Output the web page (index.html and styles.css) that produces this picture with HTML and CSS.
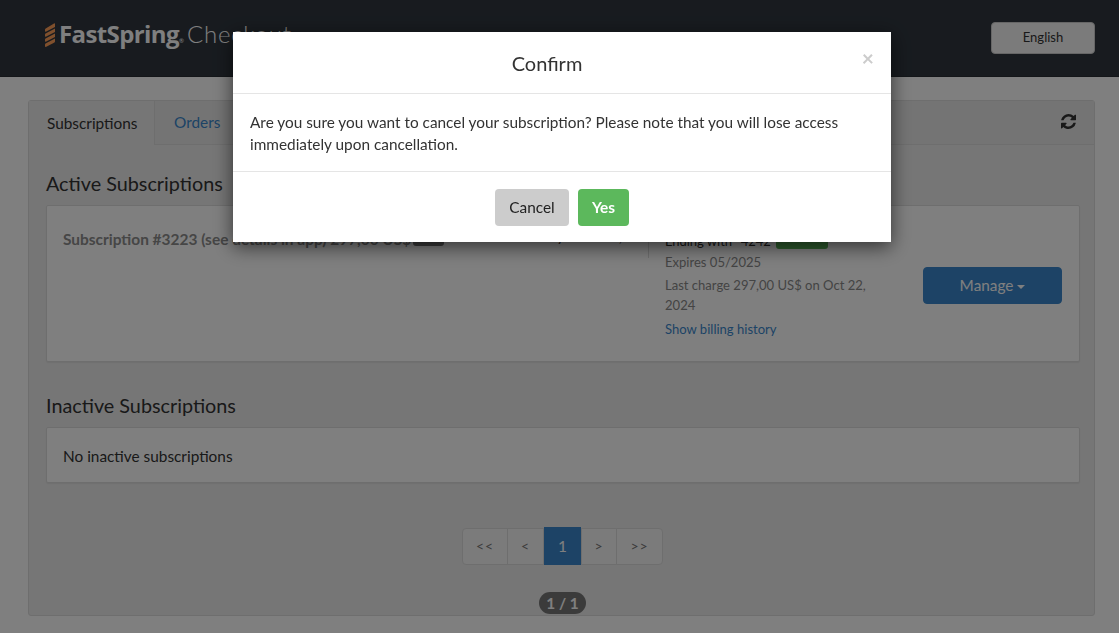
FILE: index.html
```html
<!DOCTYPE html>
<html lang="en">
<head>
<meta charset="utf-8">
<title>FastSpring Checkout</title>
<link rel="stylesheet" href="styles.css">
</head>
<body>
<header class="topbar">
  <div class="brand">
    <svg class="brand-mark" viewBox="0 0 10 24" aria-hidden="true">
      <path d="M1.5 5 L9 .5 Q10 0 10 1 V4 L.8 8.8 Q0 9 0 8 V6.5 Q0 5.8 1.5 5 Z"/>
      <path d="M1 10.2 L10 5.4 V9 L.8 13.8 Q0 14 0 13 V11.4 Q0 10.7 1 10.2 Z"/>
      <path d="M1 15.2 L10 10.4 V14 L.8 18.8 Q0 19 0 18 V16.4 Q0 15.7 1 15.2 Z"/>
      <path d="M1 20.2 L10 15.4 V18.5 Q10 19.2 9 19.7 L.8 23.9 Q0 24 0 23 V21.4 Q0 20.7 1 20.2 Z"/>
    </svg>
    <span class="brand-name">FastSpring</span><span class="brand-tm">®</span>
    <span class="brand-sub">Checkout</span>
  </div>
  <button class="lang-btn">English</button>
</header>

<main class="page">
  <section class="panel">
    <nav class="tabs">
      <a class="tab tab-active">Subscriptions</a>
      <a class="tab tab-link">Orders</a>
      <svg class="refresh" viewBox="0 128 1536 1536" aria-hidden="true"><path d="M1511 1056q0 5-1 7-64 268-268 434.5t-478 166.5q-146 0-282.5-55t-243.5-157l-129 129q-19 19-45 19t-45-19-19-45v-448q0-26 19-45t45-19h448q26 0 45 19t19 45-19 45l-137 137q71 66 161 102t187 36q134 0 250-65t186-179q11-17 53-117 8-23 30-23h192q13 0 22.5 9.5t9.5 22.5zm25-800v448q0 26-19 45t-45 19h-448q-26 0-45-19t-19-45 19-45l138-138q-148-137-349-137-134 0-250 65t-186 179q-11 17-53 117-8 23-30 23h-199q-13 0-22.5-9.5t-9.5-22.5v-7q65-268 270-434.5t480-166.5q146 0 284 55.5t245 156.5l130-129q19-19 45-19t45 19 19 45z"/></svg>
    </nav>
    <div class="panel-body">
      <h2 class="section-title">Active Subscriptions</h2>
      <article class="card sub-card">
        <div class="sub-main">
          <span class="sub-name">Subscription #3223 (see details in app) 297,00 US$</span>
          <span class="tag tag-dark"></span>
          <span class="sub-next">Every 1 month,</span>
        </div>
        <div class="sub-billing">
          <div class="bill-line bill-first">Ending with *4242 <span class="tag tag-green"></span></div>
          <div class="bill-line bill-muted">Expires 05/2025</div>
          <div class="bill-line bill-muted bill-charge">Last charge 297,00 US$ on Oct 22, 2024</div>
          <a class="bill-link">Show billing history</a>
        </div>
        <div class="sub-action">
          <button class="manage-btn">Manage <span class="caret"></span></button>
        </div>
      </article>

      <h2 class="section-title section-second">Inactive Subscriptions</h2>
      <div class="card empty-card">No inactive subscriptions</div>

      <div class="pager-wrap">
        <ul class="pager">
          <li class="pg pg-first">&lt;&lt;</li>
          <li class="pg pg-prev">&lt;</li>
          <li class="pg pg-current">1</li>
          <li class="pg pg-next">&gt;</li>
          <li class="pg pg-last">&gt;&gt;</li>
        </ul>
      </div>
      <div class="count-wrap"><span class="count">1 / 1</span></div>
    </div>
  </section>
</main>

<div class="backdrop"></div>
<div class="modal" role="dialog">
  <div class="modal-head">
    <h3 class="modal-title">Confirm</h3>
    <span class="modal-close">×</span>
  </div>
  <div class="modal-body">Are you sure you want to cancel your subscription? Please note that you will lose access immediately upon cancellation.</div>
  <div class="modal-foot">
    <button class="btn btn-cancel">Cancel</button>
    <button class="btn btn-yes">Yes</button>
  </div>
</div>
</body>
</html>
```

FILE: styles.css
```css
* { box-sizing: border-box; }
html, body { height: 100%; }
body {
  margin: 0;
  overflow: hidden;
  background: #fff;
  color: #333;
  font-family: Lato, "Liberation Sans", sans-serif;
  font-size: 15.36px;
  line-height: 20px;
}
.topbar {
  height: 77px;
  background: #30373f;
  display: flex;
  align-items: flex-start;
  justify-content: space-between;
  padding: 22px 24px 0 45px;
  border-bottom: 1px solid #282d33;
}
.brand { display: flex; align-items: baseline; color: #fff; height: 25px; margin-top: -1px; }
.brand-mark { width: 10px; height: 24px; fill: #ffa05a; align-self: center; margin: 2px 4px 0 0; }
.brand-name { font-family: "Open Sans", sans-serif; font-weight: 700; font-size: 24px; line-height: 25px; letter-spacing: -0.6px; }
.brand-tm { font-size: 6px; line-height: 25px; margin-right: 3px; }
.brand-sub { font-family: Lato, sans-serif; font-weight: 300; font-size: 24px; line-height: 25px; letter-spacing: 0.75px; }
.lang-btn {
  width: 104px; height: 32px;
  background: #f6f6f6; color: #333;
  border: 1px solid #ccc; border-radius: 4px;
  font: 13.06px/18px Lato, sans-serif;
  padding: 0 0 2px;
}
.page { padding: 23px 24px 0 28px; }
.panel {
  height: 516px;
  width: 1067px;
  background: #ececec;
  border: 1px solid #ddd;
  border-radius: 3px;
  display: flex;
  flex-direction: column;
}
.tabs {
  height: 44px;
  background: #e9e9e9;
  border-bottom: 1px solid #ddd;
  display: flex;
  align-items: flex-start;
  position: relative;
  flex: none;
}
.tab { display: block; }
.tab-active {
  width: 126px; height: 44px;
  background: #ececec;
  border-right: 1px solid #ddd;
  padding: 12px 0 0 18px;
  color: #333;
}
.tab-link { color: #3a87cc; padding: 11px 0 0 19px; }
.refresh { position: absolute; right: 18px; top: 13px; width: 15px; height: 15px; fill: #333; }
.panel-body { padding: 0 0 0 17px; flex: 1; display: flex; flex-direction: column; }
.section-title { margin: 26px 0 10px; font-size: 19.8px; line-height: 24px; font-weight: 400; color: #333; height: 24px; }
.section-second { margin: 31px 0 10px; }
.card { background: #fff; border: 1px solid #ddd; border-radius: 2px; width: 1034px; box-shadow: 0 1px 1px rgba(0,0,0,.05); }
.sub-card { height: 157px; display: flex; align-items: flex-start; padding-top: 24px; }
.sub-main { width: 602px; height: 28px; padding-left: 16px; border-right: 1px solid #ddd; margin-right: 16px; position: relative; white-space: nowrap; line-height: 18px; }
.sub-name { font-weight: 700; color: #8c8c8c; font-size: 15.45px; }
.sub-next { position: absolute; right: 26px; top: -3px; font-size: 14px; line-height: 20px; color: #333; }
.tag { display: inline-block; border-radius: 3px; }
.tag-dark { background: #777; width: 31px; height: 16px; margin-left: -2px; vertical-align: -1px; }
.tag-green { background: #5cb85c; width: 52px; height: 17px; vertical-align: -3px; margin-left: 2px; }
.sub-billing { width: 218px; font-size: 13.06px; line-height: 20px; color: #888; padding-top: 1px; }
.bill-first { color: #333; margin-bottom: 1px; letter-spacing: -0.05px; }
.bill-muted { margin-bottom: 3px; }
.bill-charge { margin-bottom: 4px; }
.bill-link { color: #3a87cc; display: block; }
.sub-action { margin-left: 40px; padding-top: 37px; }
.manage-btn {
  width: 139px; height: 37px;
  background: #3a87cc; color: #fff;
  border: 1px solid #3a87cc; border-radius: 4px;
  font: 15.36px/18px Lato, sans-serif;
  padding: 0 0 2px;
}
.caret { display: inline-block; vertical-align: middle; border-top: 4px solid #fff; border-left: 4px solid transparent; border-right: 4px solid transparent; }
.empty-card { height: 56px; padding: 18px 0 0 16px; color: #333; line-height: 20px; }
.pager-wrap { display: flex; justify-content: center; margin-top: 44px; width: 1034px; padding-right: 1px; }
.pager { display: flex; list-style: none; margin: 0; padding: 0; height: 38px; align-items: center; }
.pg { height: 37px; display: flex; align-items: center; justify-content: center; background: #f6f6f6; border: 1px solid #ddd; color: #777; font-size: 14px; letter-spacing: 1px; }
.pg-first { width: 46px; border-radius: 4px 0 0 4px; }
.pg-prev { width: 37px; margin-left: -1px; }
.pg-current { width: 37px; height: 38px; background: #3a87cc; border-color: #3a87cc; color: #fff; font-size: 15.36px; letter-spacing: 0; }
.pg-next { width: 36px; }
.pg-last { width: 47px; margin-left: -1px; border-radius: 0 4px 4px 0; }
.count-wrap { display: flex; justify-content: center; margin-top: 27px; width: 1034px; padding-right: 1px; }
.count { display: block; width: 47px; height: 22px; border-radius: 11px; background: #777; color: #fff; font-weight: 700; line-height: 23px; text-align: center; }
.backdrop { position: fixed; z-index: 10; inset: 0; background: rgba(0,0,0,.5); }
.modal {
  position: fixed;
  z-index: 20;
  left: 233px; top: 32px;
  width: 658px; height: 210px;
  background: #fff;
  box-shadow: 0 5px 18px rgba(0,0,0,.6);
  display: flex; flex-direction: column;
}
.modal-head { height: 62px; border-bottom: 1px solid #e5e5e5; position: relative; flex: none; }
.modal-title { margin: 0; text-align: center; font-size: 20px; line-height: 24px; font-weight: 400; padding: 19px 30px 0 0; color: #333; }
.modal-close { position: absolute; right: 17px; top: 14px; font-size: 21px; line-height: 24px; font-weight: 700; color: #ccc; }
.modal-body { height: 78px; padding: 17px 16px 0 17px; line-height: 22px; color: #333; flex: none; border-bottom: 1px solid #e5e5e5; }
.modal-foot { display: flex; justify-content: center; gap: 9px; padding-top: 17px; }
.btn { height: 37px; border: 0; border-radius: 4px; font: 15.36px/18px Lato, sans-serif; padding: 0 0 2px; }
.btn-cancel { width: 74px; background: #ccc; color: #222; }
.btn-yes { width: 51px; background: #5cb85c; color: #fff; font-weight: 700; }
```
